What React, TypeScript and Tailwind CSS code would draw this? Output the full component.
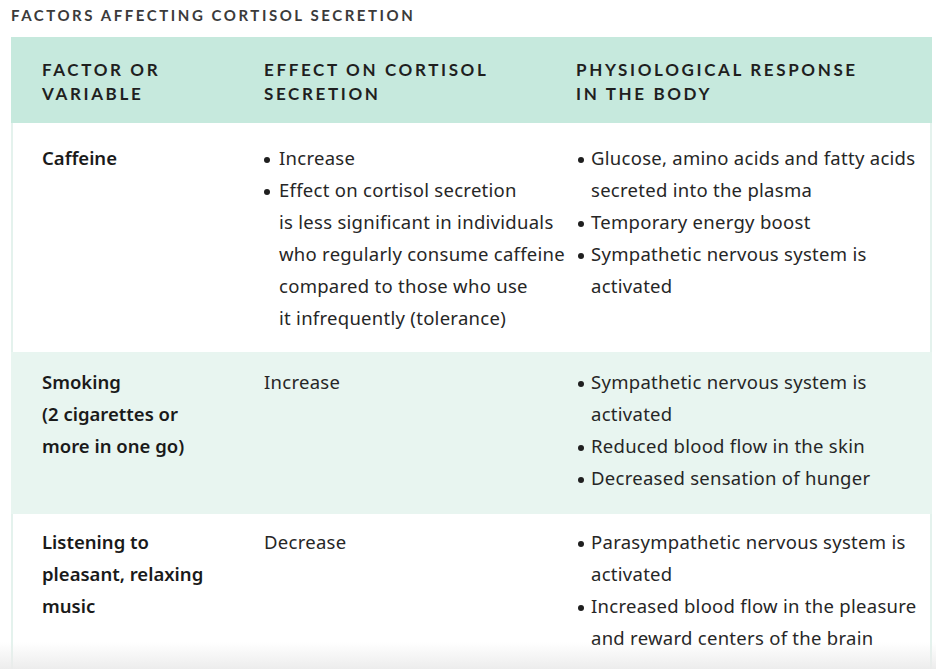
const rows = [
  {
    factor: ["Caffeine"],
    effect: [
      ["Increase"],
      [
        "Effect on cortisol secretion",
        "is less significant in individuals",
        "who regularly consume caffeine",
        "compared to those who use",
        "it infrequently (tolerance)",
      ],
    ],
    effectList: true,
    response: [
      ["Glucose, amino acids and fatty acids", "secreted into the plasma"],
      ["Temporary energy boost"],
      ["Sympathetic nervous system is", "activated"],
    ],
    tint: false,
    pad: "pt-[19px] pb-[18px]",
  },
  {
    factor: ["Smoking", "(2 cigarettes or", "more in one go)"],
    effect: [["Increase"]],
    effectList: false,
    response: [
      ["Sympathetic nervous system is", "activated"],
      ["Reduced blood flow in the skin"],
      ["Decreased sensation of hunger"],
    ],
    tint: true,
    pad: "pt-[14px] pb-[20px]",
  },
  {
    factor: ["Listening to", "pleasant, relaxing", "music"],
    effect: [["Decrease"]],
    effectList: false,
    response: [
      ["Parasympathetic nervous system is", "activated"],
      ["Increased blood flow in the pleasure", "and reward centers of the brain"],
    ],
    tint: false,
    pad: "pt-[12px] pb-[18px]",
  },
];

function Bullets({ items, indent }: { items: string[][]; indent: string }) {
  return (
    <ul>
      {items.map((lines) => (
        <li key={lines[0]} className="flex">
          <span className={`${indent} shrink-0 flex h-[32px] items-center pt-[3px]`}>
            <span className="w-[6px] h-[6px] rounded-full bg-[#1f1f1f]" />
          </span>
          <span>
            {lines.map((l) => (
              <span key={l} className="block whitespace-nowrap">
                {l}
              </span>
            ))}
          </span>
        </li>
      ))}
    </ul>
  );
}

export default function App() {
  return (
    <div
      className="relative min-h-[669px] bg-white text-[#262626] overflow-hidden"
      style={{ fontFamily: "Lato, 'Noto Sans', sans-serif" }}
    >
      <h1 className="pl-[11px] pt-[4px] h-[37px] text-[15px] font-bold tracking-[0.17em] text-[#3b3b3b]">
        FACTORS AFFECTING CORTISOL SECRETION
      </h1>

      <div className="ml-[11px] w-[921px]">
        {/* header */}
        <div className="grid grid-cols-[253px_312px_1fr] bg-[#c6e9dd] pt-[21px] pb-[17px] text-[17px] leading-[24px] font-bold tracking-[0.155em] text-[#1f1f1f]">
          <div className="pl-[31px]">
            FACTOR OR
            <br />
            VARIABLE
          </div>
          <div>
            EFFECT ON CORTISOL
            <br />
            SECRETION
          </div>
          <div>
            PHYSIOLOGICAL RESPONSE
            <br />
            IN THE BODY
          </div>
        </div>

        {rows.map((r, i) => (
          <div
            key={i}
            className={`grid grid-cols-[251px_312px_1fr] border-x-2 text-[18.5px] leading-[32px] tracking-[0.015em] ${r.pad} ${
              r.tint ? "bg-[#e8f5f0] border-[#e8f5f0]" : "bg-white border-[#e4f2ed]"
            }`}
            style={{ fontFamily: "'Noto Sans', Lato, sans-serif" }}
          >
            <div className="pl-[29px] font-semibold text-[#1a1a1a] tracking-normal">
              {r.factor.map((f) => (
                <div key={f} className="whitespace-nowrap">
                  {f}
                </div>
              ))}
            </div>
            <div>
              {r.effectList ? (
                <Bullets items={r.effect} indent="w-[15px]" />
              ) : (
                r.effect.map((e) => <div key={e[0]}>{e[0]}</div>)
              )}
            </div>
            <div className="pl-[2px]">
              <Bullets items={r.response} indent="w-[13px]" />
            </div>
          </div>
        ))}
      </div>

      {/* page fold shadow */}
      <div className="pointer-events-none absolute inset-x-0 bottom-0 h-[30px] bg-gradient-to-b from-transparent to-[#ebebeb] border-b border-[#d6d6d6]" />
    </div>
  );
}
